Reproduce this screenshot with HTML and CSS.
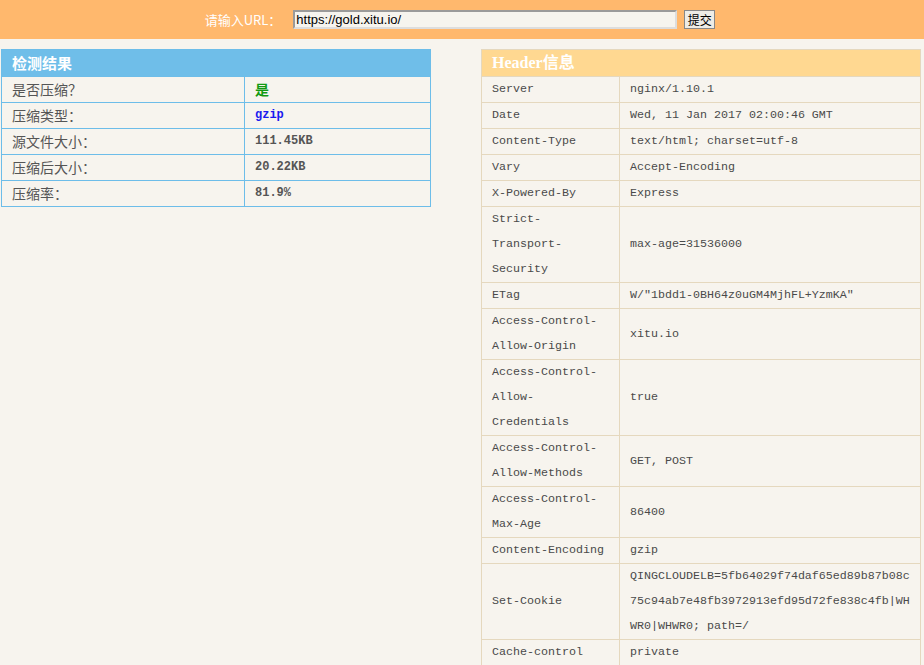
FILE: index.html
```html
<!DOCTYPE html>
<html>
<head>
<meta charset="utf-8">
<link rel="stylesheet" href="styles.css">
</head>
<body>
<div class="topbar">
  <span class="label">请输入URL：</span>
  <input class="url" type="text" value="https://gold.xitu.io/">
  <button class="submit">提交</button>
</div>
<div class="main">
  <table class="result">
    <colgroup><col class="rc1"><col></colgroup>
    <thead><tr><th colspan="2">检测结果</th></tr></thead>
    <tbody>
      <tr><td>是否压缩？</td><td class="yes">是</td></tr>
      <tr><td>压缩类型：</td><td class="val type">gzip</td></tr>
      <tr><td>源文件大小：</td><td class="val">111.45KB</td></tr>
      <tr><td>压缩后大小：</td><td class="val">20.22KB</td></tr>
      <tr><td>压缩率：</td><td class="val">81.9%</td></tr>
    </tbody>
  </table>
  <table class="headers">
    <colgroup><col class="hc1"><col></colgroup>
    <thead><tr><th colspan="2">Header信息</th></tr></thead>
    <tbody>
      <tr><td>Server</td><td>nginx/1.10.1</td></tr>
      <tr><td>Date</td><td>Wed, 11 Jan 2017 02:00:46 GMT</td></tr>
      <tr><td>Content-Type</td><td>text/html; charset=utf-8</td></tr>
      <tr><td>Vary</td><td>Accept-Encoding</td></tr>
      <tr><td>X-Powered-By</td><td>Express</td></tr>
      <tr><td>Strict-Transport-Security</td><td>max-age=31536000</td></tr>
      <tr><td>ETag</td><td>W/"1bdd1-0BH64z0uGM4MjhFL+YzmKA"</td></tr>
      <tr><td>Access-Control-Allow-Origin</td><td>xitu.io</td></tr>
      <tr><td>Access-Control-Allow-Credentials</td><td>true</td></tr>
      <tr><td>Access-Control-Allow-Methods</td><td>GET, POST</td></tr>
      <tr><td>Access-Control-Max-Age</td><td>86400</td></tr>
      <tr><td>Content-Encoding</td><td>gzip</td></tr>
      <tr><td>Set-Cookie</td><td class="cookie">QINGCLOUDELB=5fb64029f74daf65ed89b87b08c75c94ab7e48fb3972913efd95d72fe838c4fb|WHWR0|WHWR0; path=/</td></tr>
      <tr><td>Cache-control</td><td>private</td></tr>
    </tbody>
  </table>
</div>
</body>
</html>
```
FILE: styles.css
```css
html, body {
  margin: 0;
  padding: 0;
  background: #f7f4ee;
}
body {
  font-family: "Liberation Mono", "Noto Sans CJK SC", monospace;
  color: #555;
}
.topbar {
  background: #ffb86d;
  height: 39px;
  display: flex;
  align-items: center;
  justify-content: center;
  padding-right: 4px;
  box-sizing: border-box;
}
.label {
  color: #fff;
  font-family: "Noto Sans CJK SC", sans-serif;
  font-size: 13px;
  margin-right: 12px;
}
.url {
  width: 384px;
  height: 19px;
  box-sizing: border-box;
  border: 2px solid #9a9a9a;
  border-right-color: #ddd;
  border-bottom-color: #ddd;
  background: #f6f4ee;
  font-family: "Liberation Sans", Arial, sans-serif;
  font-size: 13px;
  padding: 0 1px;
  margin: 0 7px 0 0;
  color: #000;
}
.submit {
  height: 19px;
  width: 31px;
  padding: 0;
  font-family: "Noto Sans CJK SC", sans-serif;
  font-size: 12px;
  line-height: 15px;
  background: #eeece6;
  border: 1px solid #888;
  color: #000;
}
.main {
  display: flex;
  align-items: flex-start;
  justify-content: space-between;
  padding: 10px 3px 0 1px;
}
table {
  border-collapse: collapse;
  table-layout: fixed;
}
th {
  text-align: left;
  color: #fff;
  font-family: "Noto Sans CJK SC", sans-serif;
  font-weight: bold;
  font-size: 15px;
  height: 26px;
  line-height: 26px;
  padding: 0 10px;
}
td {
  padding: 0 10px;
  height: 25px;
  line-height: 25px;
  vertical-align: middle;
}
.result {
  width: 430px;
  border: 1px solid #6dbde9;
}
.result th { background: #6fbee9; }
.result td {
  border: 1px solid #6dbde9;
  font-family: "Noto Sans CJK SC", sans-serif;
  font-size: 14px;
}
.rc1 { width: 243px; }
.result td.val {
  font-family: "Liberation Mono", monospace;
  font-weight: bold;
  font-size: 12px;
}
.result td.type { color: #1a1aee; }
.result td.yes { color: #129a12; font-weight: bold; }
.headers {
  width: 440px;
  border: 1px solid #e5d8be;
}
.headers th {
  background: #ffd891;
  font-family: "Liberation Serif", "Noto Sans CJK SC", serif;
  font-size: 16px;
}
.headers td {
  border: 1px solid #e5d8be;
  font-size: 11.67px;
  color: #4a4a4a;
}
.hc1 { width: 138px; }
.headers td.cookie {
  word-break: break-all;
  padding-right: 7px;
}
```
